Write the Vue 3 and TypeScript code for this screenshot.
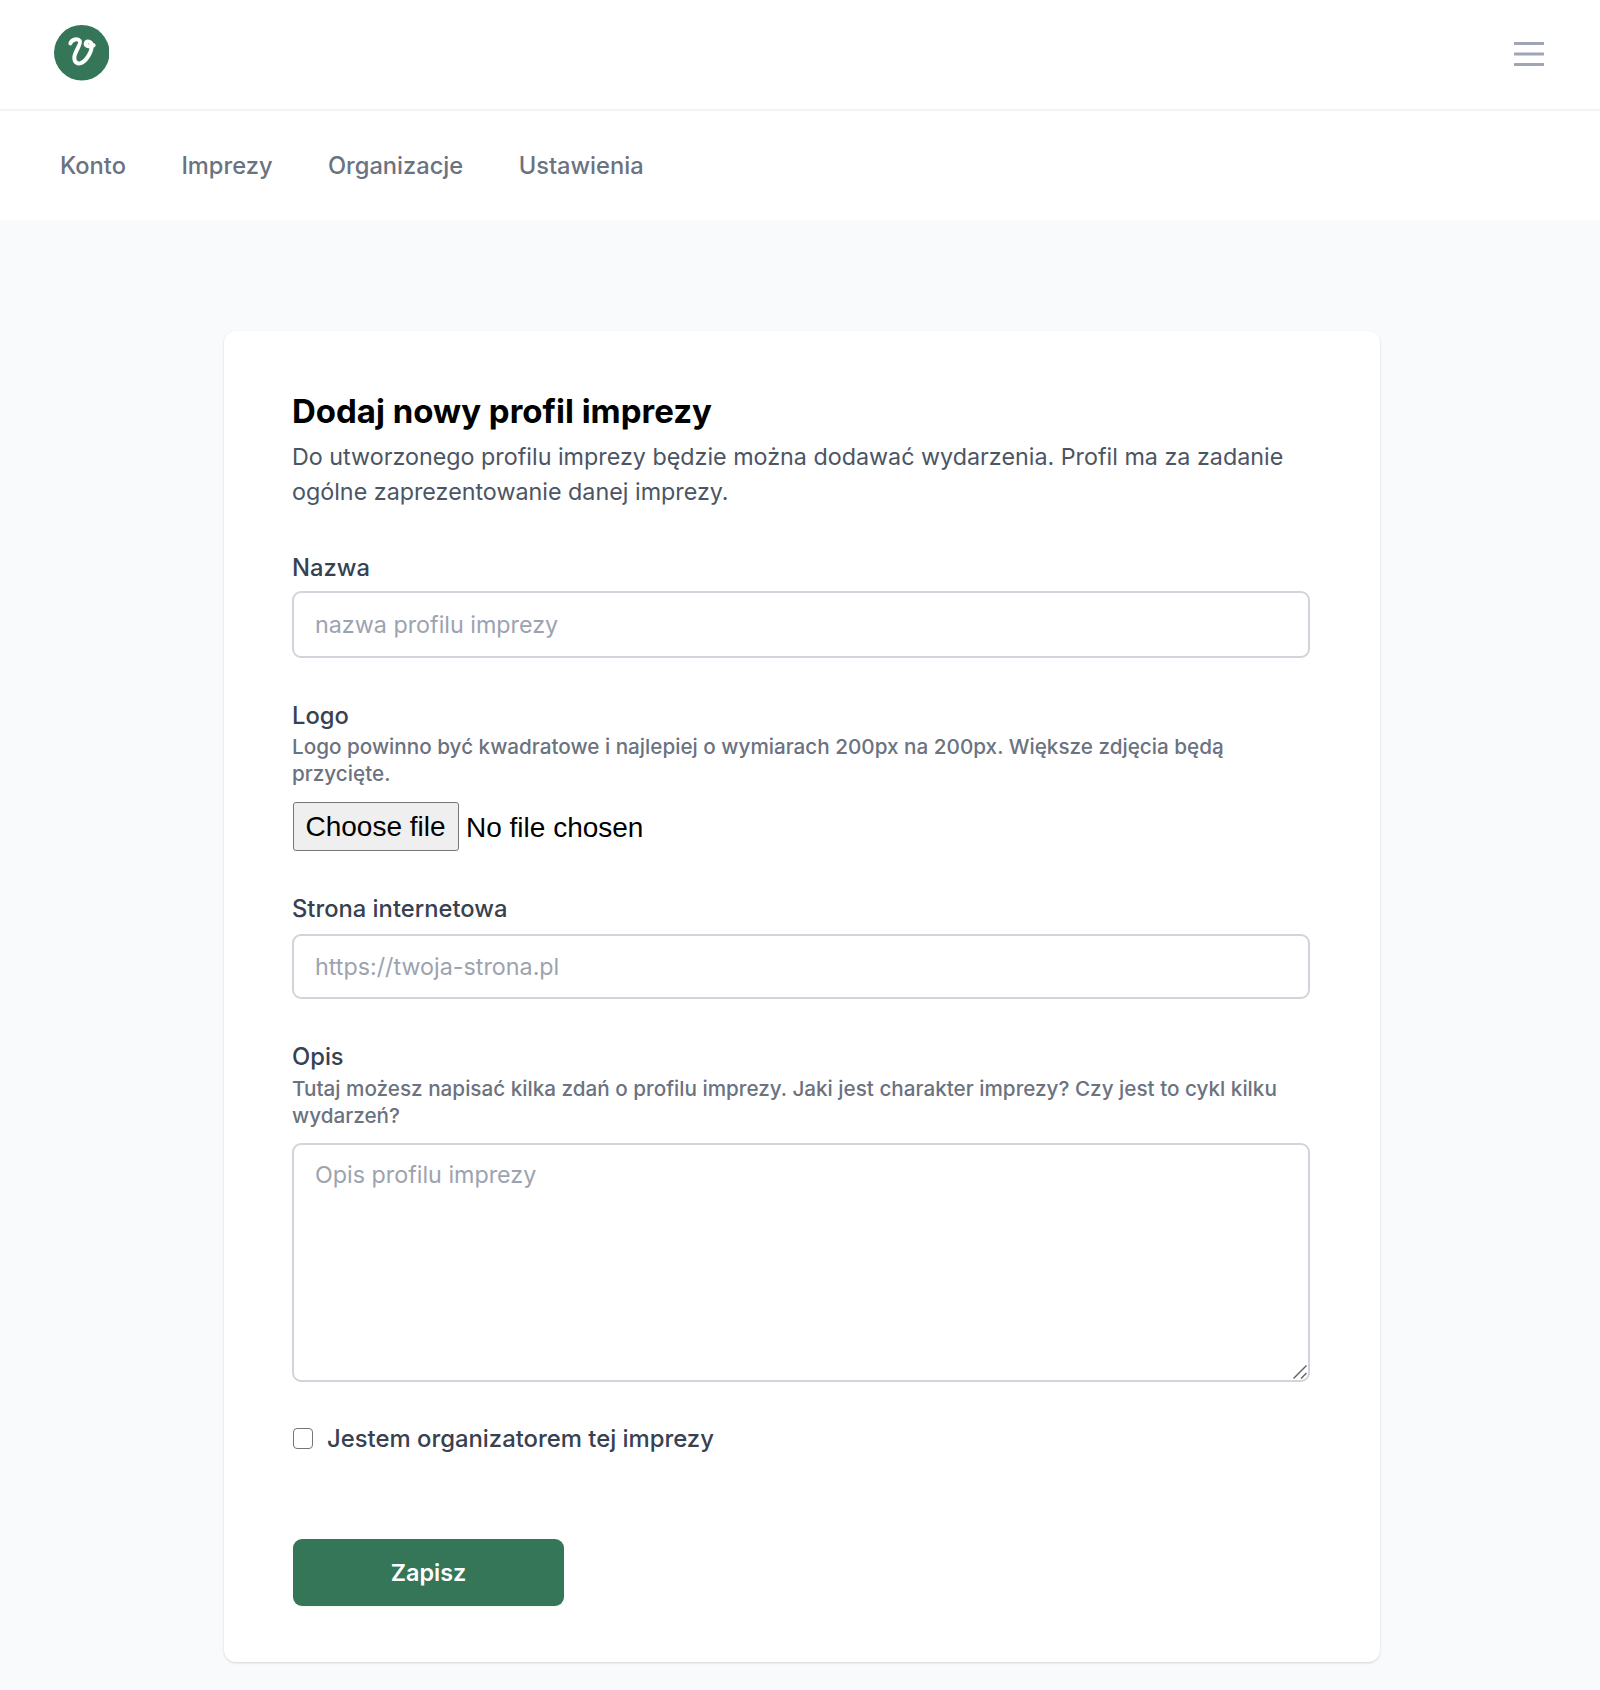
<script setup lang="ts">
const links: string[] = ['Konto', 'Imprezy', 'Organizacje', 'Ustawienia']
</script>

<template>
  <div class="page">
    <header class="top">
      <svg class="logo" viewBox="0 0 56 56" aria-hidden="true">
        <circle cx="28" cy="28" r="28" fill="#357658" />
        <path d="M16.500 18.500 C18 14.500 24 13 26 16 C28 19 20.500 27 20.500 33 C20.500 38 24 39.500 27 38.500 C32.500 36.500 38.500 27 38 20 C37.800 16.500 33 15.500 32 18.500 C31.400 21 35 22.500 40 20.500" fill="none" stroke="#fff" stroke-width="4" stroke-linecap="round" stroke-linejoin="round" />
      </svg>
      <svg class="burger" viewBox="0 0 30 24" aria-hidden="true">
        <path d="M1 1.500H29M1 12H29M1 22.500H29" stroke="#9fa5b3" stroke-width="3.200" stroke-linecap="round" />
      </svg>
    </header>
    <nav class="nav">
      <a v-for="l in links" :key="l" class="nav-link">{{ l }}</a>
    </nav>
    <main class="main">
      <form class="card" @submit.prevent>
        <h1 class="title">Dodaj nowy profil imprezy</h1>
        <p class="intro">Do utworzonego profilu imprezy będzie można dodawać wydarzenia. Profil ma za zadanie ogólne zaprezentowanie danej imprezy.</p>

        <label class="label first" for="nazwa">Nazwa</label>
        <input id="nazwa" class="field tall" placeholder="nazwa profilu imprezy" />

        <label class="label gap-a">Logo</label>
        <p class="help help-logo">Logo powinno być kwadratowe i najlepiej o wymiarach 200px na 200px. Większe zdjęcia będą przycięte.</p>
        <div class="file-row">
          <span class="file-btn">Choose file</span>
          <span class="file-text">No file chosen</span>
        </div>

        <label class="label gap-b" for="www">Strona internetowa</label>
        <input id="www" class="field site" placeholder="https://twoja-strona.pl" />

        <label class="label gap-c" for="opis">Opis</label>
        <p class="help help-opis">Tutaj możesz napisać kilka zdań o profilu imprezy. Jaki jest charakter imprezy? Czy jest to cykl kilku wydarzeń?</p>
        <div class="area-wrap">
          <textarea id="opis" class="field area" placeholder="Opis profilu imprezy"></textarea>
          <svg class="grip" viewBox="0 0 14 14" aria-hidden="true">
            <path d="M0.500 13.500L13.500 0.500M8 13.500L13.500 8" stroke="#666" stroke-width="1.500" fill="none" />
          </svg>
        </div>

        <label class="check">
          <span class="box"></span>
          <span>Jestem organizatorem tej imprezy</span>
        </label>

        <button class="save" type="submit">Zapisz</button>
      </form>
    </main>
  </div>
</template>

<style>
html, body { margin: 0; background: #f9fafb; }
</style>

<style scoped>
.page {
  width: 1600px;
  height: 1690px;
  overflow: hidden;
  background: #f9fafb;
  font-family: Inter, "Liberation Sans", sans-serif;
  color: #374151;
}
.top {
  height: 111px;
  box-sizing: border-box;
  background: #fff;
  border-bottom: 2px solid #f3f4f6;
  display: flex;
  align-items: flex-start;
  justify-content: space-between;
  padding: 25px 56px 0 53.500px;
}
.logo { width: 55.500px; height: 55.500px; display: block; }
.burger { width: 30px; height: 24px; margin-top: 17px; display: block; }
.nav {
  height: 109px;
  background: #fff;
  display: flex;
  align-items: center;
  gap: 55.500px;
  padding-left: 60px;
}
.nav-link { font-size: 23.650px; font-weight: 500; color: #6b7280; }
.main { padding-top: 111px; display: flex; justify-content: center; padding-left: 4px; }
.card {
  width: 1156px;
  height: 1331px;
  box-sizing: border-box;
  background: #fff;
  border-radius: 12px;
  box-shadow: 0 1px 3px rgba(0, 0, 0, .1), 0 1px 2px rgba(0, 0, 0, .06);
  padding: 58px 70px 0 68px;
  display: flex;
  flex-direction: column;
  align-items: stretch;
}
.title { margin: 0; font-size: 33px; line-height: 44px; font-weight: 700; color: #000; }
.intro { margin: 7px 0 0; font-size: 23.300px; line-height: 34.500px; color: #4b5563; }
.label { display: block; font-size: 23.750px; line-height: 34px; font-weight: 500; color: #374151; }
.first { margin-top: 42px; }
.gap-a { margin-top: 41px; }
.gap-b { margin-top: 41px; }
.gap-c { margin-top: 41px; }
.help { margin: 0; font-size: 20.700px; line-height: 27px; font-weight: 500; color: #6b7280; }
.help-logo { margin-bottom: 15px; }
.help-opis { margin: 1px 0 14px; }
.field {
  display: block;
  box-sizing: border-box;
  width: 100%;
  height: 65px;
  margin: 7px 0 0;
  padding: 0 21px;
  border: 2px solid #d1d5db;
  border-radius: 9px;
  background: #fff;
  font: 400 23.300px Inter, "Liberation Sans", sans-serif;
  color: #374151;
  outline: none;
}
.tall { height: 67px; margin-top: 6px; }
.site { margin-top: 8px; }
.field::placeholder { color: #9ca3af; opacity: 1; }
.area-wrap { position: relative; }
.area { height: 239px; margin: 0; padding: 13px 21px; line-height: 34px; resize: none; }
.grip { position: absolute; right: 3px; bottom: 3px; width: 14px; height: 14px; display: block; }
.file-row { display: flex; align-items: center; gap: 7px; }
.file-btn {
  box-sizing: border-box;
  width: 166px;
  height: 49px;
  margin-left: 1px;
  padding-right: 1px;
  display: flex;
  align-items: center;
  justify-content: center;
  background: #efefef;
  border: 1.500px solid #767676;
  border-radius: 3px;
  font: 400 28px "Liberation Sans", sans-serif;
  color: #000;
}
.file-text { font: 400 28px/30px "Liberation Sans", sans-serif; color: #000; padding-top: 2px; }
.check {
  display: flex;
  align-items: center;
  gap: 14px;
  margin-top: 39px;
  height: 34px;
  font-size: 23.850px;
  font-weight: 500;
  color: #374151;
}
.box {
  box-sizing: border-box;
  width: 20px;
  height: 21px;
  margin: 1px 0 0 1px;
  border: 1.500px solid #767676;
  border-radius: 4px;
  background: #fff;
}
.save {
  margin-top: 84px;
  margin-left: 1px;
  width: 271px;
  height: 67px;
  border: 0;
  border-radius: 9px;
  background: #357658;
  color: #fff;
  font: 600 23.400px Inter, "Liberation Sans", sans-serif;
  box-shadow: 0 1px 2px rgba(0, 0, 0, .05);
}
</style>
